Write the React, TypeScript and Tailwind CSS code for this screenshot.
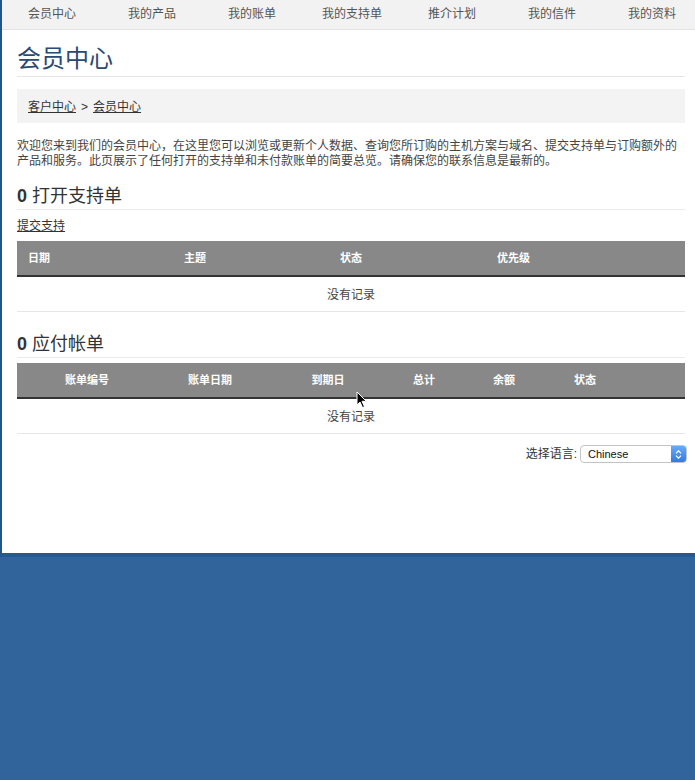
import React from 'react';

const navItems = ['会员中心', '我的产品', '我的账单', '我的支持单', '推介计划', '我的信件', '我的资料'];

const ticketCols = ['日期', '主题', '状态', '优先级'];
const invoiceCols = ['账单编号', '账单日期', '到期日', '总计', '余额', '状态', ''];

function SectionTitle({ count, label }: { count: number; label: string }) {
  return (
    <h2 className="text-[18px] leading-[22px] text-[#333] pb-[2px] border-b border-[#ebebeb]">
      <span className="font-bold">{count}</span> {label}
    </h2>
  );
}

function EmptyRow() {
  return (
    <div className="h-[35px] pt-[1px] border-b border-[#e6e6e6] flex items-center justify-center text-[12px] text-[#444]">
      没有记录
    </div>
  );
}

function Cursor() {
  return (
    <svg className="absolute left-[356px] top-[391px]" width="12" height="18" viewBox="0 0 12 18">
      <path d="M1 1 L1 14 L4 11 L6.5 16.5 L8.5 15.6 L6 10.3 L10.3 10.3 Z" fill="#000" stroke="#fff" strokeWidth="1" strokeLinejoin="round" />
    </svg>
  );
}

export default function App() {
  return (
    <div className="relative min-h-[780px] bg-[#31649a] font-['Liberation_Sans','Noto_Sans_CJK_SC',sans-serif]">
      <div className="h-[557px] bg-white border-l-2 border-[#1e5592] border-b-4 border-b-[#27598d]">
        {/* top menu */}
        <nav className="h-[30px] bg-[#f2f2f2] border-b border-[#e2e2e2] flex overflow-hidden">
          {navItems.map((item) => (
            <div key={item} className="w-[100px] shrink-0 text-center text-[12px] leading-[29px] text-[#555]">
              {item}
            </div>
          ))}
        </nav>

        <div className="pl-[15px] pr-[10px]">
          <h1 className="mt-[14px] text-[24px] leading-[30px] text-[#2a4a72] pb-[2px] border-b border-[#e6e6e6]">
            会员中心
          </h1>

          <div className="mt-[12px] h-[34px] bg-[#f3f3f3] px-[11px] pt-[2px] flex items-center text-[12px] text-[#333]">
            <span className="underline">客户中心</span>
            <span className="mx-[5px]">&gt;</span>
            <span className="underline">会员中心</span>
          </div>

          <p className="mt-[16px] text-[12px] leading-[15px] text-[#444]">
            欢迎您来到我们的会员中心，在这里您可以浏览或更新个人数据、查询您所订购的主机方案与域名、提交支持单与订购额外的
            <br />
            产品和服务。此页展示了任何打开的支持单和未付款账单的简要总览。请确保您的联系信息是最新的。
          </p>

          <div className="mt-[16px]">
            <SectionTitle count={0} label="打开支持单" />
          </div>

          <div className="mt-[8px] text-[12px] leading-[16px] text-[#333]">
            <span className="underline">提交支持</span>
          </div>

          {/* support tickets */}
          <div className="mt-[7px]">
            <div className="h-[36px] bg-[#888] border-b-2 border-[#333] grid grid-cols-[156px_156px_157px_1fr] items-center">
              {ticketCols.map((c) => (
                <div key={c} className="pl-[11px] text-[11px] font-bold text-white">
                  {c}
                </div>
              ))}
            </div>
            <EmptyRow />
          </div>

          <div className="mt-[21px]">
            <SectionTitle count={0} label="应付帐单" />
          </div>

          {/* invoices */}
          <div className="mt-[5px]">
            <div className="h-[36px] bg-[#888] border-b-2 border-[#333] grid grid-cols-[140px_106px_130px_62px_98px_64px_1fr] items-center">
              {invoiceCols.map((c, i) => (
                <div key={i} className="text-center text-[11px] font-bold text-white">
                  {c}
                </div>
              ))}
            </div>
            <EmptyRow />
          </div>

          {/* language picker */}
          <div className="mt-[11px] -mr-[2px] flex justify-end items-center gap-[3px]">
            <span className="text-[12px] text-[#333]">选择语言:</span>
            <div className="w-[107px] h-[18px] border border-[#c4c4c4] rounded-[4px] flex items-center overflow-hidden bg-white">
              <span className="flex-1 pl-[7px] text-[11px] text-[#111]">Chinese</span>
              <div className="w-[15px] h-full bg-gradient-to-b from-[#6aa8f7] to-[#2d7de6] flex flex-col items-center justify-center gap-[1px]">
                <svg width="7" height="4" viewBox="0 0 7 4">
                  <path d="M1 3.3 L3.5 0.8 L6 3.3" fill="none" stroke="#fff" strokeWidth="1.2" />
                </svg>
                <svg width="7" height="4" viewBox="0 0 7 4">
                  <path d="M1 0.7 L3.5 3.2 L6 0.7" fill="none" stroke="#fff" strokeWidth="1.2" />
                </svg>
              </div>
            </div>
          </div>
        </div>
      </div>
      <Cursor />
    </div>
  );
}
